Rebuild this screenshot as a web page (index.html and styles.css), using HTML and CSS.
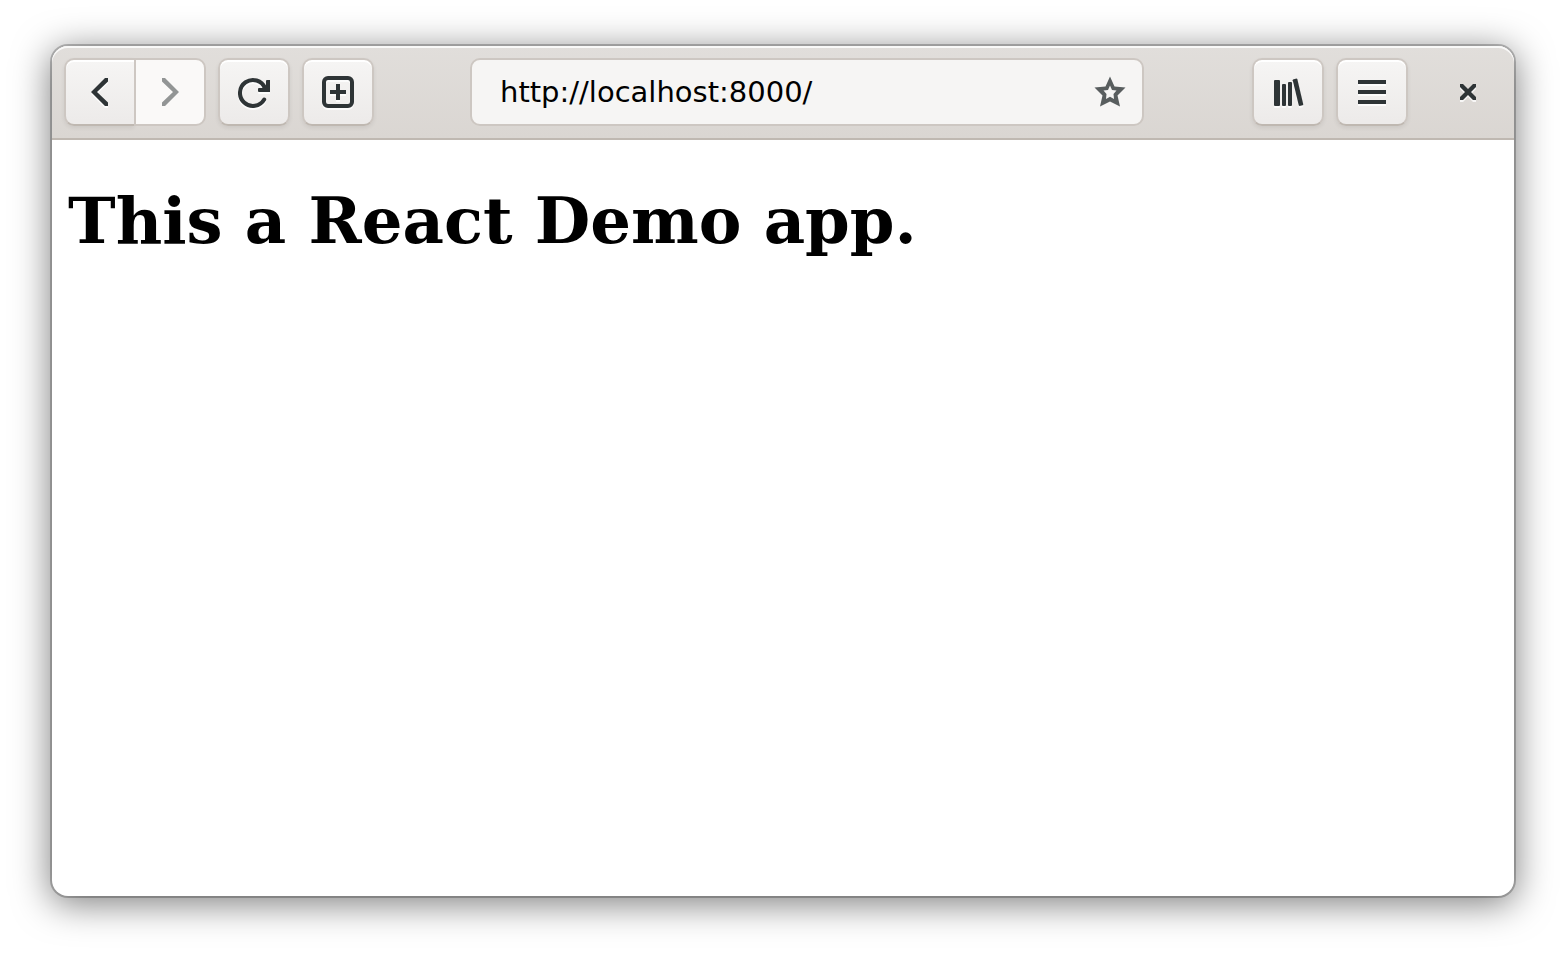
FILE: index.html
```html
<!DOCTYPE html>
<html lang="en">
<head>
<meta charset="utf-8">
<title>React Demo</title>
<link rel="stylesheet" href="styles.css">
</head>
<body>
<div class="window">
  <header class="headerbar">
    <nav class="linked" aria-label="History">
      <button class="btn" type="button" aria-label="Back">
        <svg class="icon" viewBox="0 0 32 32"><path d="M24 2V5.500L13 16L24 26.500V30H21L7 16L21 2Z"/></svg>
      </button>
      <button class="btn" type="button" aria-label="Forward" disabled>
        <svg class="icon" viewBox="0 0 32 32"><path d="M8 2V5.500L19 16L8 26.500V30H11L25 16L11 2Z"/></svg>
      </button>
    </nav>
    <button class="btn" type="button" aria-label="Reload">
      <svg class="icon" viewBox="0 0 32 32"><path d="M26.200 23.500A13 13 0 1 1 27 12" fill="none" stroke="currentColor" stroke-width="4" stroke-linecap="round"/><path d="M28 5Q28 4 29 4H32V16H21Q20 16 20 15V13Q20 12 21 12H24L28 9Z"/></svg>
    </button>
    <button class="btn" type="button" aria-label="New tab">
      <svg class="icon" viewBox="0 0 32 32"><rect x="2" y="2" width="28" height="28" rx="4" fill="none" stroke="currentColor" stroke-width="4"/><path d="M14 8H18V14H24V18H18V24H14V18H8V14H14Z"/></svg>
    </button>
    <form class="location">
      <input class="address" type="text" aria-label="Address" value="http://localhost:8000/" spellcheck="false">
      <button class="bookmark" type="button" aria-label="Bookmark this page">
        <svg class="icon" viewBox="0 0 32 32"><path fill-rule="evenodd" d="M16 0.500L20.500 10.500L31.500 11.500L23.500 19.500L26 30.500L16 25.500L6 30.500L8.500 19.500L0.500 11.500L11.500 10.500ZM16 9.500L14 14L9.500 14.500L12.500 18L12 23L16 20.800L20 23L19.500 18L22.500 14.500L18 14Z"/></svg>
      </button>
    </form>
    <button class="btn" type="button" aria-label="Library">
      <svg class="icon" viewBox="0 0 32 32"><rect x="2" y="4" width="6" height="26" rx="1"/><rect x="10" y="8" width="4" height="22" rx="1"/><rect x="16" y="6" width="4" height="24" rx="1"/><path d="M21 3.500L24.500 2.500L25.300 3L31.300 28.500L30.700 29.300L27.500 30L26.800 29.500L20.700 4.200Z"/></svg>
    </button>
    <button class="btn" type="button" aria-label="Menu">
      <svg class="icon" viewBox="0 0 32 32"><path d="M2 4H30V8H2ZM2 14H30V18H2ZM2 24H30V28H2Z"/></svg>
    </button>
    <button class="close" type="button" aria-label="Close">
      <svg class="icon" viewBox="0 0 32 32"><path d="M8 8H11L16 13L21 8H24V11L19 16L24 21V24H21L16 19L11 24H8V21L13 16L8 11Z"/></svg>
    </button>
  </header>
  <main class="page">
    <h1 class="title">This a React Demo app.</h1>
  </main>
</div>
</body>
</html>
```
FILE: styles.css
```css
* {
  box-sizing: border-box;
}

body {
  margin: 0;
  min-height: 100vh;
  display: flex;
  padding: 46px 52px 58px;
  background: #fff;
}

.window {
  flex: 1;
  min-width: 0;
  display: flex;
  flex-direction: column;
  border-radius: 16px;
  background: #fff;
  box-shadow: 0 0 0 2px rgba(0, 0, 0, 0.23), 0 6px 36px 2px rgba(0, 0, 0, 0.5);
}

.headerbar {
  display: flex;
  align-items: center;
  gap: 12px;
  padding: 12px;
  border-bottom: 2px solid #bfb8b1;
  border-radius: 16px 16px 0 0;
  background: linear-gradient(to top, #dad6d2, #e1dedb);
  box-shadow: inset 0 2px rgba(255, 255, 255, 0.8);
}

.linked {
  display: flex;
}

.btn {
  flex: none;
  display: flex;
  align-items: center;
  justify-content: center;
  width: 72px;
  height: 68px;
  margin: 0;
  padding: 0;
  border: 2px solid #cdc7c2;
  border-bottom-color: #bfb8b1;
  border-radius: 10px;
  background: linear-gradient(to top, #edebea 4px, #f6f5f4);
  box-shadow: inset 0 2px #fff, 0 2px 4px rgba(0, 0, 0, 0.07);
  color: #2e3436;
}

.linked .btn:first-child {
  border-right: 0;
  border-radius: 10px 0 0 10px;
  width: 70px;
}

.linked .btn:last-child {
  border-radius: 0 10px 10px 0;
}

.btn:disabled {
  border-color: #cdc7c2;
  background: #faf9f8;
  box-shadow: none;
  color: #929595;
}

.icon {
  display: block;
  width: 32px;
  height: 32px;
  fill: currentColor;
  filter: drop-shadow(0 2px 0 rgba(255, 255, 255, 0.77));
}

.btn:disabled .icon,
.bookmark .icon {
  filter: none;
}

.location {
  flex: 1;
  min-width: 0;
  display: flex;
  align-items: center;
  height: 68px;
  margin: 0 96px 0 84px;
  padding: 0 16px 0 28px;
  border: 2px solid #cdc7c2;
  border-radius: 10px;
  background: #f6f5f4;
}

.address {
  flex: 1;
  min-width: 0;
  padding: 0;
  border: 0;
  outline: 0;
  background: transparent;
  color: #000;
  font: 29px/36px "DejaVu Sans", sans-serif;
}

.bookmark,
.close {
  flex: none;
  padding: 0;
  border: 0;
  background: transparent;
}

.bookmark {
  color: #585d5e;
}

.close {
  display: flex;
  align-items: center;
  justify-content: center;
  width: 68px;
  height: 68px;
  margin-left: 14px;
  color: #2e3436;
}

.page {
  flex: 1;
  padding: 0 16px;
}

.title {
  margin: 43px 0;
  color: #000;
  font: bold 64px "DejaVu Serif", serif;
}
```
